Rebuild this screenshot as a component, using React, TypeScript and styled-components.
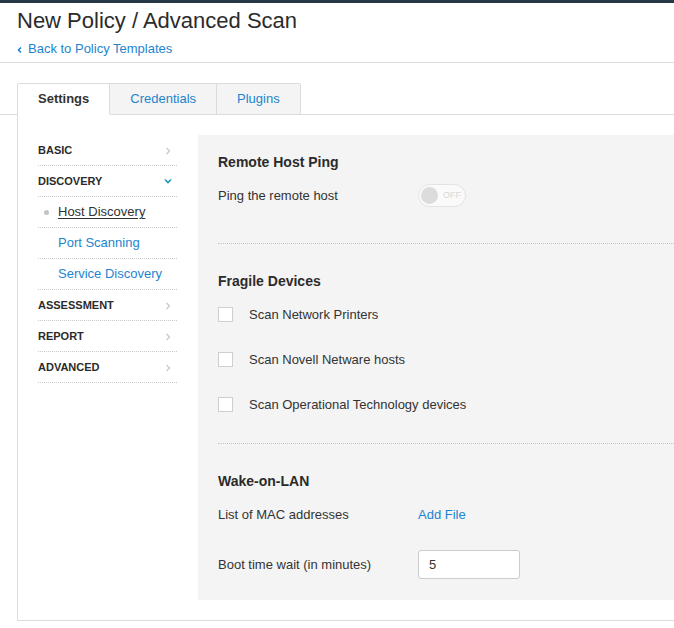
import React from "react";
import styled, { createGlobalStyle } from "styled-components";

const Global = createGlobalStyle`
  html, body { margin: 0; padding: 0; background: #fff; }
  body { font-family: "Liberation Sans", Arial, sans-serif; color: #333; overflow: hidden; }
  * { box-sizing: border-box; }
`;

const TopBar = styled.div`
  height: 3px;
  background: #263746;
`;

const Header = styled.header`
  padding: 5px 17px 4px;
  border-bottom: 1px solid #dcdcdc;
`;

const Title = styled.h1`
  margin: 0;
  font-size: 22px;
  line-height: 25px;
  font-weight: normal;
  color: #2b2b2b;
`;

const BackLink = styled.a`
  display: inline-flex;
  align-items: center;
  gap: 6px;
  margin-top: 8px;
  font-size: 13px;
  line-height: 15px;
  color: #1d84cf;
  text-decoration: none;
`;

const TabStrip = styled.div`
  display: flex;
  margin-top: 20px;
  padding-left: 17px;
  border-bottom: 1px solid #dcdcdc;
`;

const Tab = styled.div<{ $active?: boolean }>`
  height: 32px;
  padding: 0 20px;
  display: flex;
  align-items: center;
  font-size: 13px;
  margin-bottom: -1px;
  border: 1px solid #dcdcdc;
  border-left: ${(p) => (p.$active ? "1px solid #dcdcdc" : "none")};
  border-bottom: ${(p) => (p.$active ? "1px solid #fff" : "1px solid #dcdcdc")};
  border-radius: ${(p) => (p.$active ? "2px 0 0 0" : "0")};
  background: ${(p) => (p.$active ? "#fff" : "#f4f4f4")};
  color: ${(p) => (p.$active ? "#333" : "#1d84cf")};
  font-weight: ${(p) => (p.$active ? "bold" : "normal")};
  &:last-child { border-radius: 0 2px 0 0; }
`;

const Body = styled.div`
  margin-left: 17px;
  border-left: 1px solid #dcdcdc;
  border-bottom: 1px solid #dcdcdc;
  display: flex;
  align-items: flex-start;
  padding: 0 0 20px 20px;
`;

const Sidebar = styled.nav`
  width: 139px;
  margin-top: 20px;
  flex-shrink: 0;
`;

const NavRow = styled.div<{ $sub?: boolean; $current?: boolean }>`
  height: 31px;
  display: flex;
  align-items: center;
  justify-content: space-between;
  border-bottom: 1px dotted #c8c8c8;
  padding-left: ${(p) => (p.$sub ? "20px" : "0")};
  padding-right: 6px;
  position: relative;
  font-size: ${(p) => (p.$sub ? "13px" : "11px")};
  font-weight: ${(p) => (p.$sub ? "normal" : "bold")};
  color: ${(p) => (p.$sub ? (p.$current ? "#333" : "#1d84cf") : "#2b2b2b")};
  text-transform: ${(p) => (p.$sub ? "none" : "uppercase")};
`;

const NavText = styled.span<{ $current?: boolean }>`
  text-decoration: ${(p) => (p.$current ? "underline" : "none")};
  text-underline-offset: 2px;
`;

const Bullet = styled.span`
  position: absolute;
  left: 6px;
  top: 50%;
  width: 5px;
  height: 5px;
  margin-top: -2px;
  border-radius: 50%;
  background: #c4c4c4;
`;

const Panel = styled.main`
  flex: 1;
  margin-top: 20px;
  margin-left: 21px;
  background: #f4f4f4;
  padding: 0 0 0 20px;
`;

const Section = styled.section`
  padding: 26px 0 16px;
  &:first-child { padding-top: 16px; }
  & + & { border-top: 1px dotted #c4c4c4; }
`;

const SectionTitle = styled.h2`
  margin: 0;
  font-size: 14px;
  line-height: 22px;
  font-weight: bold;
  color: #2b2b2b;
`;

const Field = styled.div<{ $offset?: number; $after?: number }>`
  height: 45px;
  display: flex;
  align-items: center;
  margin-top: ${(p) => p.$offset ?? 0}px;
  margin-bottom: ${(p) => p.$after ?? 0}px;
  font-size: 13px;
  color: #333;
`;

const Label = styled.span`
  width: 200px;
  flex-shrink: 0;
`;

const Toggle = styled.span`
  width: 48px;
  height: 23px;
  border: 1px solid #e2e2e2;
  border-radius: 12px;
  background: #fafafa;
  display: flex;
  align-items: center;
  padding-left: 2px;
  gap: 5px;
`;

const Knob = styled.span`
  width: 17px;
  height: 17px;
  border-radius: 50%;
  background: #dcdcdc;
`;

const ToggleText = styled.span`
  font-size: 9px;
  color: #d8d8d8;
`;

const Check = styled.span`
  width: 15px;
  height: 15px;
  background: #fff;
  border: 1px solid #cfcfcf;
  margin: 0 16px 0 0;
  flex-shrink: 0;
`;

const LinkText = styled.a`
  color: #1d84cf;
  text-decoration: none;
`;

const Input = styled.div`
  width: 102px;
  height: 29px;
  border: 1px solid #cccccc;
  border-radius: 3px;
  background: #fff;
  display: flex;
  align-items: center;
  padding-left: 10px;
  font-size: 13px;
  color: #333;
`;

const Chevron = ({ down }: { down?: boolean }) =>
  down ? (
    <svg width="8" height="6" viewBox="0 0 8 6" style={{ marginRight: -1 }}>
      <polyline points="1,1.5 4,4.5 7,1.5" fill="none" stroke="#1a9ab3" strokeWidth="1.6" />
    </svg>
  ) : (
    <svg width="6" height="8" viewBox="0 0 6 8" style={{ marginTop: 3 }}>
      <polyline points="1.5,1 4.5,4 1.5,7" fill="none" stroke="#cacaca" strokeWidth="1.3" />
    </svg>
  );

const BackChevron = () => (
  <svg width="5" height="8" viewBox="0 0 5 8" style={{ marginTop: 2 }}>
    <polyline points="4,1.5 1.5,4 4,6.5" fill="none" stroke="#1d84cf" strokeWidth="1.6" />
  </svg>
);

export default function App() {
  return (
    <>
      <Global />
      <TopBar />
      <Header>
        <Title>New Policy / Advanced Scan</Title>
        <BackLink href="#">
          <BackChevron />
          Back to Policy Templates
        </BackLink>
      </Header>
      <TabStrip>
        <Tab $active>Settings</Tab>
        <Tab>Credentials</Tab>
        <Tab>Plugins</Tab>
      </TabStrip>
      <Body>
        <Sidebar>
          <NavRow>
            <NavText>Basic</NavText>
            <Chevron />
          </NavRow>
          <NavRow>
            <NavText>Discovery</NavText>
            <Chevron down />
          </NavRow>
          <NavRow $sub $current>
            <Bullet />
            <NavText $current>Host Discovery</NavText>
          </NavRow>
          <NavRow $sub>
            <NavText>Port Scanning</NavText>
          </NavRow>
          <NavRow $sub>
            <NavText>Service Discovery</NavText>
          </NavRow>
          <NavRow>
            <NavText>Assessment</NavText>
            <Chevron />
          </NavRow>
          <NavRow>
            <NavText>Report</NavText>
            <Chevron />
          </NavRow>
          <NavRow>
            <NavText>Advanced</NavText>
            <Chevron />
          </NavRow>
        </Sidebar>
        <Panel>
          <Section>
            <SectionTitle>Remote Host Ping</SectionTitle>
            <Field $after={9}>
              <Label>Ping the remote host</Label>
              <Toggle>
                <Knob />
                <ToggleText>OFF</ToggleText>
              </Toggle>
            </Field>
          </Section>
          <Section>
            <SectionTitle>Fragile Devices</SectionTitle>
            <Field>
              <Check />
              Scan Network Printers
            </Field>
            <Field>
              <Check />
              Scan Novell Netware hosts
            </Field>
            <Field>
              <Check />
              Scan Operational Technology devices
            </Field>
          </Section>
          <Section>
            <SectionTitle>Wake-on-LAN</SectionTitle>
            <Field>
              <Label>List of MAC addresses</Label>
              <LinkText href="#">Add File</LinkText>
            </Field>
            <Field $offset={5} $after={-3}>
              <Label>Boot time wait (in minutes)</Label>
              <Input>5</Input>
            </Field>
          </Section>
        </Panel>
      </Body>
    </>
  );
}
